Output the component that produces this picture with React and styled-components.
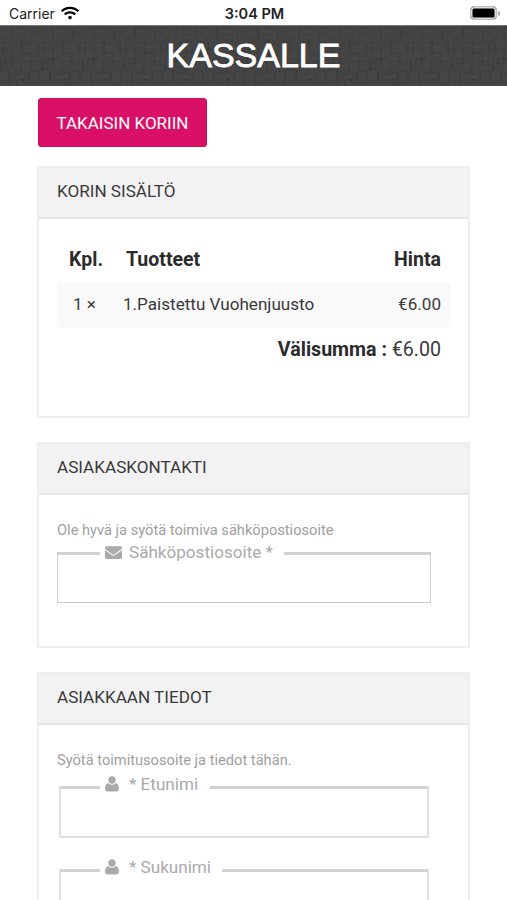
import React from "react";
import styled, { createGlobalStyle } from "styled-components";
import { FaEnvelope, FaWifi } from "react-icons/fa";

const fields = [
  { label: "* Etunimi", width: 110 },
  { label: "* Sukunimi", width: 122 },
];

// dark woven strip behind the page title
const Weave = () => (
  <WeaveSvg aria-hidden="true">
    <defs>
      <pattern id="weave" width="41" height="60" patternUnits="userSpaceOnUse">
        <path
          d="M0 2h41M14 8h14M34 7h7M0 13h9M13 17h15M33 16h8M0 23h10M22 27h11M3 33h15M27 35h12M0 43h7M12 47h15M30 45h9M2 56h17M24 57h14"
          stroke="#3c3c3c"
        />
        <path
          d="M12 2v11M32 4v9M22 12v17M3 16v12M38 18v10M12 22v20M31 27v14M1 33v12M21 34v12M9 44v14M29 46v9M39 44v14"
          stroke="#353535"
        />
        <path
          d="M14 5h12M34 4h6M1 19h8M24 21h10M4 30h11M25 32h10M11 39h13M2 50h6M15 51h11M31 52h7"
          stroke="#4b4b4b"
        />
        <path d="M21 53h4l-2 3zM4 36h3l-1 2z" fill="#343434" />
      </pattern>
      <filter id="soft">
        <feGaussianBlur stdDeviation="0.7" />
      </filter>
    </defs>
    <rect width="100%" height="100%" fill="#444" />
    <rect
      width="100%"
      height="100%"
      fill="url(#weave)"
      filter="url(#soft)"
      opacity="0.85"
    />
  </WeaveSvg>
);

const UserIcon = () => (
  <svg width="14" height="16" viewBox="0 0 14 16" fill="currentColor">
    <circle cx="7" cy="4" r="3.7" />
    <path d="M3.2 7.2C5 9.1 9 9.1 10.8 7.2C13 7.5 14 9.6 14 12.6C14 14.4 13.1 15.4 11.6 15.4H2.4C.9 15.4 0 14.4 0 12.6C0 9.6 1 7.5 3.2 7.2z" />
  </svg>
);

const App = () => {
  return (
    <>
      <GlobalStyle />
      <Screen>
        <StatusBar>
          <Carrier>
            Carrier <FaWifi size={18} />
          </Carrier>
          <Clock>3:04 PM</Clock>
          <Battery>
            <BatteryBody />
            <BatteryTip />
          </Battery>
        </StatusBar>
        <Header>
          <Weave />
          <Title>KASSALLE</Title>
        </Header>
        <Content>
          <BackButton>TAKAISIN KORIIN</BackButton>

          <Panel height={252}>
            <PanelHead>KORIN SISÄLTÖ</PanelHead>
            <Cart>
              <CartHead>
                <span>Kpl.</span>
                <span>Tuotteet</span>
                <span>Hinta</span>
              </CartHead>
              <CartRow>
                <span>1 ×</span>
                <span>1.Paistettu Vuohenjuusto</span>
                <span>€6.00</span>
              </CartRow>
              <Subtotal>
                <b>Välisumma :</b> €6.00
              </Subtotal>
            </Cart>
          </Panel>

          <Panel height={206}>
            <PanelHead>ASIAKASKONTAKTI</PanelHead>
            <Hint>Ole hyvä ja syötä toimiva sähköpostiosoite</Hint>
            <WideField>
              <FieldLabel width={184}>
                <IconSlot>
                  <FaEnvelope size={17} />
                </IconSlot>
                Sähköpostiosoite *
              </FieldLabel>
            </WideField>
          </Panel>

          <Panel height={380}>
            <PanelHead>ASIAKKAAN TIEDOT</PanelHead>
            <Hint>Syötä toimitusosoite ja tiedot tähän.</Hint>
            <FieldList>
              {fields.map((field) => (
                <Field key={field.label}>
                  <FieldLabel width={field.width}>
                    <IconSlot>
                      <UserIcon />
                    </IconSlot>
                    {field.label}
                  </FieldLabel>
                </Field>
              ))}
            </FieldList>
          </Panel>
        </Content>
      </Screen>
    </>
  );
};

export default App;

const GlobalStyle = createGlobalStyle`
  * {
    box-sizing: border-box;
  }
  body {
    margin: 0;
    background-color: #fff;
    font-family: Roboto, sans-serif;
    color: #3a3a3a;
  }
`;

const Screen = styled.div`
  height: 900px;
  overflow: hidden;
`;

const StatusBar = styled.div`
  display: grid;
  grid-template-columns: 1fr auto 1fr;
  align-items: center;
  height: 25px;
  padding: 2px 7px 0 9px;
  font-family: Inter, sans-serif;
  font-size: 14px;
  color: #222;
`;

const Carrier = styled.div`
  display: flex;
  align-items: center;
  gap: 6px;
  svg {
    margin-top: -2px;
    color: #000;
  }
`;

const Clock = styled.div`
  font-size: 14.5px;
  font-weight: 600;
`;

const Battery = styled.div`
  display: flex;
  align-items: center;
  justify-content: flex-end;
  gap: 1px;
  margin-top: -1px;
`;

const BatteryBody = styled.div`
  width: 27px;
  height: 14px;
  border: 1px solid #bbb;
  border-radius: 4px;
  background-color: #000;
  box-shadow: inset 0 0 0 1.5px #ddd;
`;

const BatteryTip = styled.div`
  width: 2px;
  height: 5px;
  border-radius: 0 2px 2px 0;
  background-color: #aaa;
`;

const Header = styled.header`
  display: grid;
  place-items: center;
  height: 61px;
  border-top: 1px solid #777;
`;

const WeaveSvg = styled.svg`
  grid-area: 1 / 1;
  width: 100%;
  height: 60px;
`;

const Title = styled.h1`
  grid-area: 1 / 1;
  z-index: 1;
  margin: -1px 0 0;
  font-family: "Liberation Sans", sans-serif;
  font-size: 34px;
  font-weight: 400;
  -webkit-text-stroke: 0.8px #fff;
  color: #fff;
`;

const Content = styled.main`
  padding: 12px 37px 0 37px;
`;

const BackButton = styled.button`
  display: block;
  width: 169px;
  height: 49px;
  margin: 0 0 19px 1px;
  padding: 0;
  border: 1px solid #cb0f5c;
  border-radius: 3px;
  background-color: #da1066;
  font-family: Roboto, sans-serif;
  font-size: 17px;
  color: #fff;
`;

const Panel = styled.section`
  height: ${(props) => props.height}px;
  margin-bottom: 24px;
  border: 2px solid #eee;
`;

const PanelHead = styled.div`
  height: 51px;
  padding: 0 18px;
  border-bottom: 2px solid #e6e6e6;
  background-color: #f2f2f2;
  font-size: 17.1px;
  line-height: 47px;
`;

const Cart = styled.div`
  padding: 16px 17px 0 18px;
`;

const CartHead = styled.div`
  display: grid;
  grid-template-columns: 57px 1fr auto;
  height: 48px;
  padding: 0 10px 0 12px;
  font-size: 19.5px;
  font-weight: 700;
  line-height: 49px;
  color: #2b2b2b;
`;

const CartRow = styled.div`
  display: grid;
  grid-template-columns: 50px 1fr auto;
  height: 44px;
  padding: 0 10px 0 16px;
  background-color: #f9f9f9;
  font-size: 17.1px;
  line-height: 42px;
`;

const Subtotal = styled.div`
  padding-right: 10px;
  font-size: 19.6px;
  line-height: 46px;
  text-align: right;
  b {
    color: #2b2b2b;
  }
`;

const Hint = styled.p`
  margin: 26px 18px 13px;
  font-size: 14.65px;
  line-height: 18px;
  color: #a0a0a0;
`;

const FieldList = styled.div`
  padding-top: 4px;
`;

const Field = styled.div`
  width: 370px;
  height: 52px;
  margin: 0 0 31px 20px;
  padding-left: 39px;
  border: 2px solid #e0e0e0;
  border-top: 3px solid #d2d2d2;
`;

const WideField = styled(Field)`
  width: 374px;
  height: 51px;
  margin-left: 18px;
  padding-left: 42px;
  border: 1px solid #ccc;
  border-top: 3px solid #d2d2d2;
`;

const FieldLabel = styled.div`
  display: flex;
  align-items: center;
  width: ${(props) => props.width}px;
  height: 22px;
  margin-top: -16px;
  background-color: #fff;
  font-size: 17.1px;
  color: #aaa;
  ${WideField} & {
    margin-top: -14px;
  }
`;

const IconSlot = styled.span`
  display: flex;
  width: 24px;
  margin-left: 5px;
`;
